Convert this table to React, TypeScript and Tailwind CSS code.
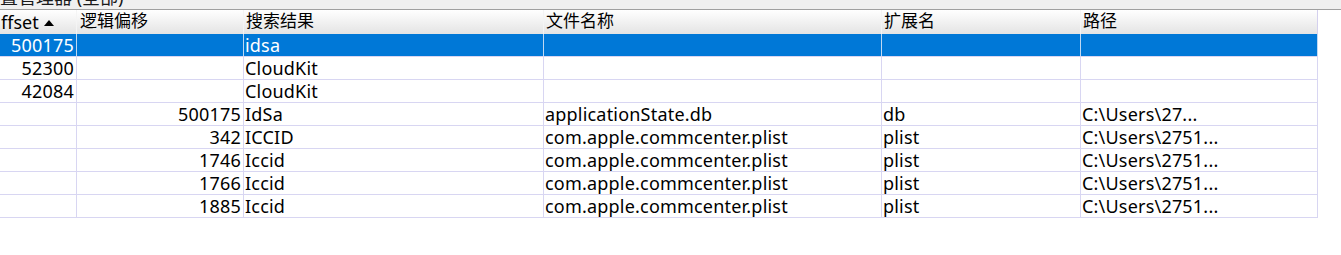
import React from "react";

type Row = {
  offset: string;
  logical: string;
  hit: string;
  file: string;
  ext: string;
  path: string;
};

const rows: Row[] = [
  { offset: "500175", logical: "", hit: "idsa", file: "", ext: "", path: "" },
  { offset: "52300", logical: "", hit: "CloudKit", file: "", ext: "", path: "" },
  { offset: "42084", logical: "", hit: "CloudKit", file: "", ext: "", path: "" },
  { offset: "", logical: "500175", hit: "IdSa", file: "applicationState.db", ext: "db", path: "C:\\Users\\27..." },
  { offset: "", logical: "342", hit: "ICCID", file: "com.apple.commcenter.plist", ext: "plist", path: "C:\\Users\\2751..." },
  { offset: "", logical: "1746", hit: "Iccid", file: "com.apple.commcenter.plist", ext: "plist", path: "C:\\Users\\2751..." },
  { offset: "", logical: "1766", hit: "Iccid", file: "com.apple.commcenter.plist", ext: "plist", path: "C:\\Users\\2751..." },
  { offset: "", logical: "1885", hit: "Iccid", file: "com.apple.commcenter.plist", ext: "plist", path: "C:\\Users\\2751..." },
];

const cols = "grid grid-cols-[77px_167px_300px_338px_199px_237px]";

export default function App() {
  return (
    <div
      className="w-[1341px] h-[255px] bg-white text-black overflow-hidden text-[18px] leading-[22px] tracking-[0.2px]"
      style={{ fontFamily: '"Noto Sans", "Noto Sans CJK SC", sans-serif' }}
    >
      {/* window caption, mostly scrolled off */}
      <div className="h-[9px] bg-[#f0f0f0] overflow-hidden border-b border-[#a0a0a0] box-content">
        <div className="-mt-[14px] text-[18px] leading-[22px] tracking-normal text-[#1a1a1a]">置管理器 (全部)</div>
      </div>

      {/* column headers */}
      <div className={`${cols} w-[1318px] h-[24px] bg-gradient-to-b from-white to-[#e4e4e4] text-[17px] tracking-normal`}>
        <div className="flex items-center border-r border-[#f4f4f4] text-[18px] pl-px">
          ffset
          <svg width="10" height="7" viewBox="0 0 10 7" className="ml-[5px] mt-[1px]">
            <path d="M0 7 L5 1 L10 7 Z" fill="#000" />
          </svg>
        </div>
        <div className="border-r border-[#f4f4f4] pl-[3px]">逻辑偏移</div>
        <div className="border-r border-[#f4f4f4] pl-[2px]">搜索结果</div>
        <div className="border-r border-[#f4f4f4] pl-[2px]">文件名称</div>
        <div className="border-r border-[#f4f4f4] pl-[2px]">扩展名</div>
        <div className="border-r border-[#d4d0ee] pl-[2px]">路径</div>
      </div>

      {/* result rows */}
      <div className="w-[1318px]">
        {rows.map((r, i) => {
          const sel = i === 0;
          const cell = sel
            ? "border-r border-[#bfd8f2] whitespace-nowrap overflow-hidden"
            : "border-r border-[#d8d6f2] whitespace-nowrap overflow-hidden";
          return (
            <div
              key={i}
              className={`${cols} h-[23px] border-b ${
                sel ? "bg-[#0078d7] text-white border-[#d8d6f2]" : "border-[#d8d6f2]"
              }`}
            >
              <div className={`${cell} text-right pr-[2px]`}>{r.offset}</div>
              <div className={`${cell} text-right pr-[2px]`}>{r.logical}</div>
              <div className={`${cell} pl-px`}>{r.hit}</div>
              <div className={`${cell} pl-px`}>{r.file}</div>
              <div className={`${cell} pl-px`}>{r.ext}</div>
              <div className={`${cell} pl-px`}>{r.path}</div>
            </div>
          );
        })}
      </div>
    </div>
  );
}
